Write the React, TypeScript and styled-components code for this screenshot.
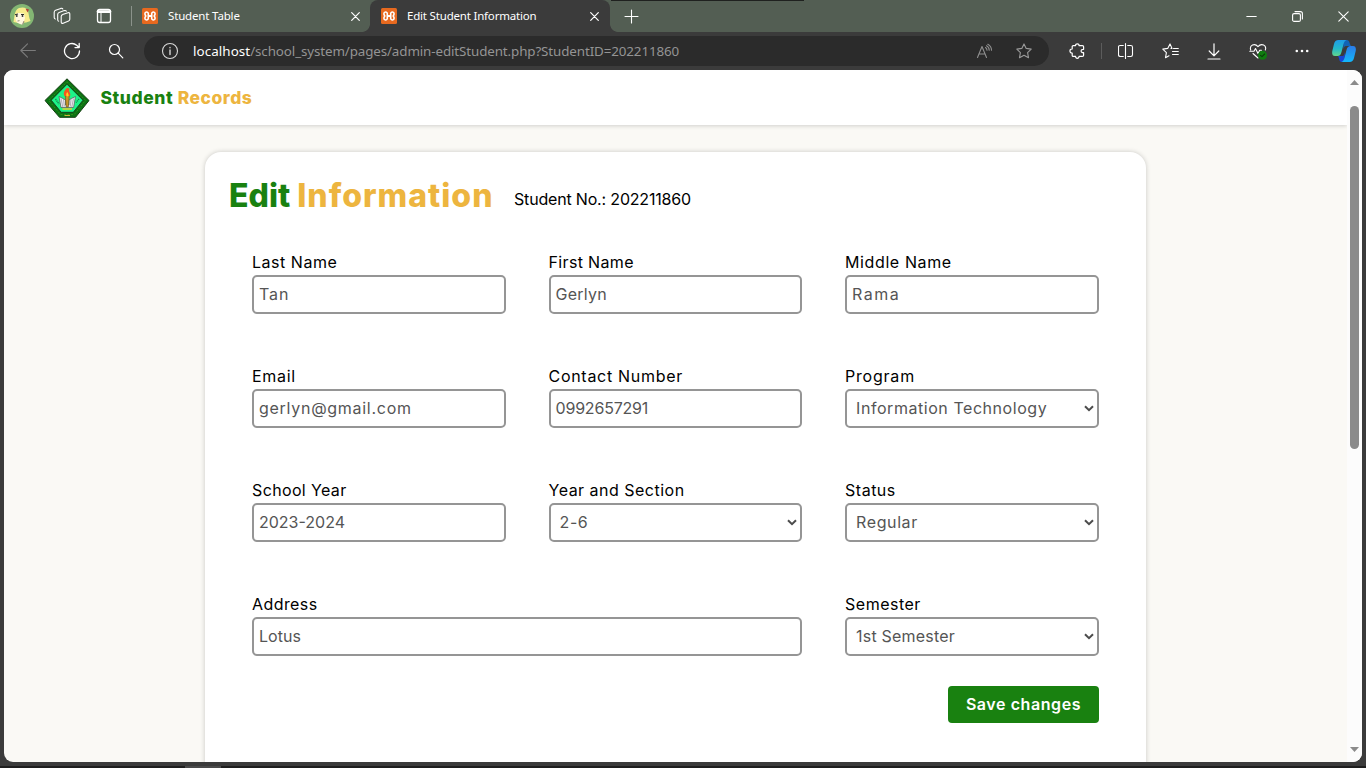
import React from "react";
import styled, { createGlobalStyle } from "styled-components";

const GlobalStyle = createGlobalStyle`
  *, *::before, *::after { box-sizing: border-box; }
  html, body { margin: 0; height: 100%; overflow: hidden; }
  body { background: #3b3b3b; font-family: "Inter", sans-serif; font-size: 16px; color: #000; }
  svg { display: block; flex: none; }
`;

const UI_FONT = '"Noto Sans", sans-serif';
const GREEN = "#198110";
const GOLD = "#edb53f";
const CHROME = "#3b3b3b";
const TITLEBAR = "#535e53";

/* ---------- window frame ---------- */

const Window = styled.div`
  width: 1366px;
  height: 768px;
  display: flex;
  flex-direction: column;
  background: ${CHROME};
  overflow: hidden;
`;

const TabStrip = styled.div`
  height: 32px;
  flex: none;
  display: flex;
  background: linear-gradient(#1f211f, #1f211f) 611px 0 / 193px 1px no-repeat, ${TITLEBAR};
  color: #fff;
  font-family: ${UI_FONT};
`;

const Slot = styled.div<{ $w: number }>`
  width: ${(p) => p.$w}px;
  flex: none;
  display: flex;
  align-items: center;
  justify-content: center;
`;

const Divider = styled.div<{ $h: number; $mx: string; $c: string }>`
  width: 1px;
  height: ${(p) => p.$h}px;
  margin: ${(p) => p.$mx};
  align-self: center;
  flex: none;
  background: ${(p) => p.$c};
`;

const Tab = styled.div<{ $active?: boolean }>`
  position: relative;
  display: flex;
  align-items: center;
  width: ${(p) => (p.$active ? 240 : 238)}px;
  padding: ${(p) => (p.$active ? "0 8px 0 11px" : "0 7px 0 10px")};
  ${(p) =>
    p.$active &&
    `
    background: ${CHROME};
    border-radius: 8px 8px 0 0;
    &::before, &::after {
      content: "";
      position: absolute;
      bottom: 0;
      width: 8px;
      height: 8px;
    }
    &::before { left: -8px; background: radial-gradient(circle at 0 0, transparent 7.5px, ${CHROME} 8.2px); }
    &::after { right: -8px; background: radial-gradient(circle at 100% 0, transparent 7.5px, ${CHROME} 8.2px); }
  `}
`;

const TabTitle = styled.span<{ $track: number }>`
  flex: 1;
  margin-left: 10px;
  font-size: 11.5px;
  line-height: 16px;
  letter-spacing: ${(p) => p.$track}px;
  white-space: nowrap;
`;

const Spacer = styled.div`
  flex: 1;
`;

const Toolbar = styled.div`
  height: 38px;
  flex: none;
  display: flex;
  align-items: center;
  padding-left: 6px;
  color: #fff;
`;

const AddressBar = styled.div`
  width: 905px;
  height: 30px;
  margin: 0 6px;
  padding: 0 6px 0 4px;
  flex: none;
  display: flex;
  align-items: center;
  border-radius: 15px;
  background: #2b2b2b;
  font-family: ${UI_FONT};
  font-size: 13.4px;
`;

const Url = styled.div`
  flex: 1;
  margin-left: 1px;
  line-height: 20px;
  white-space: nowrap;
  color: #949494;
  letter-spacing: -0.12px;
`;

const Host = styled.span`
  color: #fff;
  letter-spacing: 0.07px;
`;

/* ---------- page ---------- */

const Viewport = styled.div`
  width: 1358px;
  height: 692px;
  flex: none;
  margin-left: 4px;
  display: flex;
  overflow: hidden;
  border-radius: 9px;
  background: #faf9f5;
`;

const Page = styled.div`
  width: 1343px;
  flex: none;
  display: flex;
  flex-direction: column;
  align-items: flex-start;
`;

const SiteHeader = styled.header`
  width: 100%;
  height: 55px;
  flex: none;
  display: flex;
  align-items: center;
  padding-left: 40px;
  background: #fff;
  box-shadow: 0 1px 4px rgba(0, 0, 0, 0.17);
`;

const Brand = styled.div`
  display: flex;
  margin-left: 10.5px;
  font-size: 17.5px;
  font-weight: 800;
  line-height: 26px;
`;

const Word = styled.span<{ $color: string; $track: number; $gap?: number }>`
  color: ${(p) => p.$color};
  letter-spacing: ${(p) => p.$track}px;
  margin-right: ${(p) => p.$gap ?? 0}px;
`;

const Card = styled.main`
  width: 941px;
  height: 640px;
  flex: none;
  margin: 27px 0 0 201px;
  padding: 20px 47px 0 24px;
  border-radius: 16px;
  background: #fff;
  box-shadow: 0 0 5px rgba(0, 0, 0, 0.2);
`;

const TitleRow = styled.div`
  display: flex;
  height: 48px;
`;

const Title = styled.h1`
  display: flex;
  width: 266px;
  margin: 0;
  font-size: 32px;
  font-weight: 800;
  line-height: 48px;
`;

const StudentNo = styled.span`
  margin-left: 19px;
  padding-top: 15px;
  font-size: 16px;
  line-height: 24px;
  letter-spacing: -0.18px;
`;

const Form = styled.form`
  display: grid;
  grid-template-columns: repeat(3, 1fr);
  column-gap: 42.6px;
  row-gap: 51px;
  margin: 31px 0 0 23px;
`;

const Field = styled.label<{ $span?: number }>`
  grid-column: span ${(p) => p.$span ?? 1};
  display: flex;
  flex-direction: column;
`;

const Caption = styled.span<{ $track: number }>`
  height: 24px;
  line-height: 22px;
  letter-spacing: ${(p) => p.$track}px;
`;

const Control = styled.span<{ $select?: boolean }>`
  height: 39px;
  display: flex;
  align-items: center;
  justify-content: space-between;
  padding: ${(p) => (p.$select ? "0 3px 0 9px" : "0 5px")};
  border: 2px solid #959595;
  border-radius: 5px;
  background: #fff;
  color: #555;
`;

const Value = styled.span<{ $track: number }>`
  padding-bottom: 2px;
  letter-spacing: ${(p) => p.$track}px;
  white-space: nowrap;
`;

const Actions = styled.div`
  display: flex;
  justify-content: flex-end;
  margin-top: 30px;
`;

const SaveButton = styled.button`
  width: 151px;
  height: 37px;
  padding: 0 0 2px;
  border: 0;
  border-radius: 4px;
  background: ${GREEN};
  color: #fff;
  font: 600 16px "Inter", sans-serif;
  letter-spacing: 0.58px;
`;

const Scrollbar = styled.div`
  width: 15px;
  display: flex;
  flex-direction: column;
  align-items: center;
  padding: 10px 0 10px;
  background: #fcfcfc;
`;

const Thumb = styled.div`
  width: 9px;
  height: 343px;
  margin-top: 21px;
  border-radius: 4.5px;
  background: #8b8b8b;
`;

const Taskbar = styled.div`
  height: 2px;
  margin-top: 4px;
  flex: none;
  background: linear-gradient(#4a4a4a, #4a4a4a) 185px 0 / 36px 2px no-repeat, #1e1e1e;
`;

/* ---------- icons ---------- */

const Line = ({ w, h = w, c = "#fff", sw = 1.1, children }: { w: number; h?: number; c?: string; sw?: number; children: React.ReactNode }) => (
  <svg width={w} height={h} viewBox={`0 0 ${w} ${h}`} fill="none" stroke={c} strokeWidth={sw} strokeLinecap="round" strokeLinejoin="round">
    {children}
  </svg>
);

const Avatar = () => (
  <svg width="24" height="24" viewBox="0 0 24 24">
    <circle cx="12" cy="12" r="12" fill="#83b673" />
    <path d="M3.500 18C4.500 14 4 6 9 4C13 2.800 17 3.500 18 7C19 11 19 14 20.500 17L16 18.500L8 19Z" fill="#f7ec8c" />
    <path d="M5.500 10.500C8 8 11 9.500 14 9.500L15 14L13 20.500C10 20.500 6 19 5.500 15Z" fill="#fff7df" />
    <path d="M5 10.800L8 10M11 10.500L14 10.500" stroke="#2c2f2a" strokeWidth="1.100" />
    <circle cx="6.800" cy="12" r=".9" fill="#333" />
    <circle cx="12.500" cy="12" r=".9" fill="#333" />
    <path d="M7.500 17L9.500 16.700M12.500 20.500L14 17" stroke="#6b5b4c" strokeWidth=".7" />
    <path d="M15.500 4.500L19 5.500L17.500 8.500Z" fill="#b5413a" />
  </svg>
);

const Workspaces = () => (
  <Line w={18}>
    <path d="M9.600 7.600L15 5.700C16 5.400 16.800 5.900 16.800 6.900V12.200C16.800 13 16.400 13.600 15.600 13.900L10.200 16.200C9 16.600 8.200 16.100 8.200 15V9.600C8.200 8.600 8.600 7.900 9.600 7.600Z" />
    <path d="M5.700 14.200C5 14 4.700 13.500 4.700 12.700V7.500C4.700 6.500 5.100 5.800 6.100 5.400L11.300 3.600C12.300 3.300 13 3.500 13.300 4.200" />
    <path d="M2.300 12C1.500 11.800 1.200 11.300 1.200 10.500V5.300C1.200 4.300 1.600 3.600 2.600 3.200L7.800 1.400C8.800 1.100 9.500 1.300 9.800 2" />
  </Line>
);

const TabActions = () => (
  <Line w={16} sw={1.300}>
    <rect x="1.500" y="1.500" width="13" height="13" rx="2.200" />
    <path d="M2 3.600H14" strokeWidth="2.600" />
    <path d="M5 5V14" strokeWidth="1" />
  </Line>
);

const Xampp = () => (
  <svg width="16" height="16" viewBox="0 0 16 16">
    <rect width="16" height="16" rx="1.500" fill="#e7691f" />
    <path
      d="M6.300 8V5.800C6.300 3.400 2.900 3.600 2.900 5.800C2.900 6.900 3.900 8 3.900 8C3.900 8 2.900 9.100 2.900 10.200C2.900 12.400 6.300 12.600 6.300 10.200ZM9.700 8V5.800C9.700 3.400 13.100 3.600 13.100 5.800C13.100 6.900 12.100 8 12.100 8C12.100 8 13.100 9.100 13.100 10.200C13.100 12.400 9.700 12.600 9.700 10.200Z"
      fill="none"
      stroke="#fff"
      strokeWidth="1.600"
      strokeLinejoin="round"
    />
    <path d="M6.300 8H9.700" stroke="#fff" strokeWidth="2" />
  </svg>
);

const CloseTab = () => (
  <Slot $w={16}>
    <Line w={10} sw={1.200}>
      <path d="M1.700 1.700L9.300 9.300M9.300 1.700L1.700 9.300" />
    </Line>
  </Slot>
);

const Crest = () => (
  <svg width="46" height="40" viewBox="0 0 46 40">
    <path d="M23 .8L45 22.500L31.500 39.300H15.500L1 22.500Z" fill="#0a7312" stroke="#143d12" strokeWidth="1" />
    <path d="M23 3.800L41.500 22.300L30.300 36.500H16.500L4.600 22.300Z" fill="none" stroke="#3c8e1f" strokeWidth=".8" strokeDasharray="2 1.500" />
    <path d="M23 6.200L39 22.200L29.300 34.300H17.200L7.200 22.200Z" fill="#1df488" stroke="#18351b" strokeWidth=".9" />
    <path d="M15 18.500L19 20.500L21.500 22V27H25V22L27.500 20.500L31.500 18.500L29.600 29.500H17Z" fill="#eceaf0" stroke="#555" strokeWidth=".7" />
    <path d="M17 20.500L18.800 29M29.500 20.500L27.800 29M19.500 21L20.300 28.500M27 21L26.300 28.500" fill="none" stroke="#8a8790" strokeWidth=".6" />
    <path d="M21.300 18H25.200L24.300 29H22.200Z" fill="#c9962a" stroke="#6e4f18" strokeWidth=".6" />
    <path d="M23 10C20 13 19 15 20.500 18H26C27.500 15 24 14 25.500 10.500Z" fill="#f5551f" />
    <path d="M23.200 14C22 16 22 17 22.500 18.500H24.500C25 17 24.500 16 23.200 14Z" fill="#ffd01f" />
    <path d="M18.500 31H28" stroke="#e3cf34" strokeWidth="1.500" />
    <path d="M11.500 21L15 26M35 21L32 24.500" stroke="#16834d" strokeWidth="1.400" strokeDasharray="1.200 .7" />
    <path d="M20.500 37.500H26" stroke="#c8b638" strokeWidth="1" />
  </svg>
);

const Copilot = () => (
  <svg width="24" height="22" viewBox="0 0 24 22">
    <defs>
      <linearGradient id="cpA" x1="0" y1="0" x2="0" y2="1">
        <stop offset="0" stopColor="#1f9ce8" />
        <stop offset=".55" stopColor="#24b9c9" />
        <stop offset="1" stopColor="#62d58c" />
      </linearGradient>
      <linearGradient id="cpB" x1="0" y1="0" x2="0" y2="1">
        <stop offset="0" stopColor="#2b7be8" />
        <stop offset="1" stopColor="#12b8fb" />
      </linearGradient>
    </defs>
    <path d="M11 0H15C17.500 0 17.500 4 19 6H14C12.500 6 12 7 11.500 9Z" fill="#1263b5" />
    <path d="M6 16H10.500C12 16 12.500 14 13 12L12.500 22H9.500C7 22 7.500 18 6 16Z" fill="#1746d6" />
    <path d="M6.500 0H14.500C12 1 11.500 4 10.800 7L9.500 12C8.700 15 7.500 16 5.500 16H3C.5 16-.3 14 .3 11L2 4C2.700 1.500 4 0 6.500 0Z" fill="url(#cpA)" />
    <path d="M17.500 22H9.500C12 21 12.500 18 13.200 15L14.500 10C15.300 7 16.500 6 18.500 6H21C23.500 6 24.300 8 23.700 11L22 18C21.300 20.500 20 22 17.500 22Z" fill="url(#cpB)" />
  </svg>
);

const Chevron = () => (
  <svg width="10" height="7" viewBox="0 0 10 7" fill="none" stroke="#4c4c4c" strokeWidth="2">
    <path d="M1 1.200L5 5.200L9 1.200" />
  </svg>
);

const ScrollArrow = ({ down }: { down?: boolean }) => (
  <svg width="9" height="5" viewBox="0 0 9 5">
    <path d={down ? "M0 0H9L4.500 5Z" : "M0 5H9L4.500 0Z"} fill="#8b8b8b" />
  </svg>
);

/* ---------- form data ---------- */

type FieldData = { label: string; lt: number; value: string; vt: number; select?: boolean; span?: number };

const fields: FieldData[] = [
  { label: "Last Name", lt: 0.53, value: "Tan", vt: 0.9 },
  { label: "First Name", lt: 0.34, value: "Gerlyn", vt: 0.25 },
  { label: "Middle Name", lt: 0.6, value: "Rama", vt: 1.5 },
  { label: "Email", lt: 0.7, value: "gerlyn@gmail.com", vt: 0.72 },
  { label: "Contact Number", lt: 0.7, value: "0992657291", vt: -0.2 },
  { label: "Program", lt: 0.78, value: "Information Technology", vt: 0.55, select: true },
  { label: "School Year", lt: 0.36, value: "2023-2024", vt: 0 },
  { label: "Year and Section", lt: 0.49, value: "2-6", vt: 0.6, select: true },
  { label: "Status", lt: 0.5, value: "Regular", vt: 0.6, select: true },
  { label: "Address", lt: 0.43, value: "Lotus", vt: 0.05, span: 2 },
  { label: "Semester", lt: 0.5, value: "1st Semester", vt: 0.2, select: true },
];

export default function App() {
  return (
    <Window>
      <GlobalStyle />
      <TabStrip>
        <Slot $w={44}><Avatar /></Slot>
        <Slot $w={36}><Workspaces /></Slot>
        <Slot $w={48}><TabActions /></Slot>
        <Divider $h={20} $mx="0 0 0 3px" $c="#8b938b" />
        <Tab>
          <Xampp />
          <TabTitle $track={-0.16}>Student Table</TabTitle>
          <CloseTab />
        </Tab>
        <Tab $active>
          <Xampp />
          <TabTitle $track={-0.19}>Edit Student Information</TabTitle>
          <CloseTab />
        </Tab>
        <Slot $w={42}>
          <Line w={15}><path d="M7.500 1V14M1 7.500H14" /></Line>
        </Slot>
        <Spacer />
        <Slot $w={46}><Line w={11}><path d="M.8 5.500H10.200" /></Line></Slot>
        <Slot $w={46}>
          <Line w={11}>
            <rect x=".6" y="2.600" width="7.800" height="7.800" rx="1.500" />
            <path d="M3 .6H8.400C9.600 .6 10.400 1.400 10.400 2.600V8" />
          </Line>
        </Slot>
        <Slot $w={46}><Line w={11}><path d="M.8 .8L10.200 10.200M10.200 .8L.8 10.200" /></Line></Slot>
      </TabStrip>

      <Toolbar>
        <Slot $w={44}>
          <Line w={16} c="#7b7b7b"><path d="M15.400 7.500H.8M7.500 .8L.8 7.500L7.500 14.200" /></Line>
        </Slot>
        <Slot $w={44}>
          <Line w={18} sw={1.300}>
            <path d="M16.500 9A7.500 7.500 0 1 1 13.700 3.200L16 5.500M16.200 1.500V5.600H12" />
          </Line>
        </Slot>
        <Slot $w={44}>
          <Line w={16} sw={1.200}>
            <circle cx="6.500" cy="6.500" r="5" />
            <path d="M10.200 10.200L14.800 14.800" />
          </Line>
        </Slot>
        <AddressBar>
          <Slot $w={44}>
            <Line w={18} c="#d8d8d8">
              <circle cx="9" cy="9" r="7.500" />
              <path d="M9 8V12.500M9 5.400V5.700" strokeWidth="1.400" />
            </Line>
          </Slot>
          <Url>
            <Host>localhost</Host>/school_system/pages/admin-editStudent.php?StudentID=202211860
          </Url>
          <Slot $w={39}>
            <Line w={17} c="#8f8f8f">
              <path d="M1.500 14.500L6 3.500L10.500 14.500M3 11H9M9.500 4.500C10.500 5.200 11 6 11 7.300M10.500 2.800C12.300 3.700 13.200 5.200 13.200 7.300M11.800 1.200C14.300 2.500 15.500 4.500 15.500 7.300" />
            </Line>
          </Slot>
          <Slot $w={39}>
            <Line w={16} c="#9a9a9a">
              <path d="M8 .9L10.200 5.400L15.200 6.100L11.600 9.600L12.500 14.700L8 12.300L3.500 14.700L4.400 9.600L.8 6.100L5.800 5.400Z" />
            </Line>
          </Slot>
        </AddressBar>
        <Slot $w={44}>
          <Line w={16} sw={1.200}>
            <path d="M4.200 2.600H6.600C6.300 .2 10.300 .2 10 2.600H13.400C14.200 2.600 14.600 3 14.600 3.800V6.300C11.300 6 11.300 10 14.600 9.700V12.200C14.600 13 14.200 13.400 13.400 13.400H10C10.300 15.900 6.300 15.900 6.600 13.400H4.200C3.600 13.400 3.200 13 3.200 12.400V10C.2 10.300 .2 5.700 3.200 6V3.600C3.200 3 3.600 2.600 4.200 2.600Z" />
          </Line>
        </Slot>
        <Divider $h={16} $mx="0 2px" $c="#5c5c5c" />
        <Slot $w={44}>
          <Line w={16}>
            <path d="M5.300 2.500H2.300C1.100 2.500 .5 3 .5 4.200V11.800C.5 13 1.100 13.500 2.300 13.500H5.300M9.700 2.500H12.700C13.900 2.500 14.500 3 14.500 4.200V11.800C14.500 13 13.900 13.500 12.700 13.500H9.700M7.500 .6V15.400" />
          </Line>
        </Slot>
        <Slot $w={44}>
          <Line w={17} h={16}>
            <path d="M9 5.400H10L8 .9L5.700 5.400L.8 6.100L4.400 9.600L3.500 14.700L7 12.800M11.500 5.500H16.300M10.500 8.500H16.300M10.500 11.500H16.300" />
          </Line>
        </Slot>
        <Slot $w={44}>
          <Line w={14} h={17} sw={1.200}><path d="M7 .8V12.500M2.200 8L7 12.800L11.800 8M1 16H13" /></Line>
        </Slot>
        <Slot $w={44}>
          <Line w={18} h={17}>
            <path d="M1.700 7C.2 2.500 5.500-.5 9 3.700C12.500-.5 18 2.500 16.300 7M.8 8.300H5L6.500 5.500L9 10.500L10.700 7.300H12.500M4 10.500L9 15" />
            <circle cx="13.500" cy="12.300" r="4.500" fill="#107c10" stroke="none" />
            <path d="M11.500 12.300L13 13.700L15.600 11" stroke="#0a3d0a" />
          </Line>
        </Slot>
        <Slot $w={44}>
          <svg width="14" height="4" viewBox="0 0 14 4" fill="#fff">
            <circle cx="1.800" cy="2" r="1.300" />
            <circle cx="7" cy="2" r="1.300" />
            <circle cx="12.200" cy="2" r="1.300" />
          </svg>
        </Slot>
        <Slot $w={40}><Copilot /></Slot>
      </Toolbar>

      <Viewport>
        <Page>
          <SiteHeader>
            <Crest />
            <Brand>
              <Word $color={GREEN} $track={0.55} $gap={4.500}>Student</Word>
              <Word $color={GOLD} $track={0.5}>Records</Word>
            </Brand>
          </SiteHeader>
          <Card>
            <TitleRow>
              <Title>
                <Word $color={GREEN} $track={0} $gap={7}>Edit</Word>
                <Word $color={GOLD} $track={1}>Information</Word>
              </Title>
              <StudentNo>Student No.: 202211860</StudentNo>
            </TitleRow>
            <Form>
              {fields.map((f) => (
                <Field key={f.label} $span={f.span}>
                  <Caption $track={f.lt}>{f.label}</Caption>
                  <Control $select={f.select}>
                    <Value $track={f.vt}>{f.value}</Value>
                    {f.select && <Chevron />}
                  </Control>
                </Field>
              ))}
            </Form>
            <Actions>
              <SaveButton type="button">Save changes</SaveButton>
            </Actions>
          </Card>
        </Page>
        <Scrollbar>
          <ScrollArrow />
          <Thumb />
          <Spacer />
          <ScrollArrow down />
        </Scrollbar>
      </Viewport>
      <Taskbar />
    </Window>
  );
}
